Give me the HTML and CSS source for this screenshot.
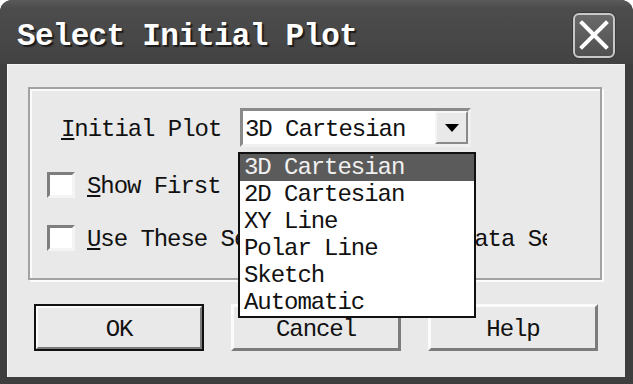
FILE: index.html
```html
<!DOCTYPE html>
<html>
<head>
<meta charset="utf-8">
<link rel="stylesheet" href="styles.css">
</head>
<body>
<div class="window">
  <div class="titlebar">
    <span class="title">Select Initial Plot</span>
    <div class="close">
      <svg width="30" height="30" viewBox="0 0 30 30"><path d="M3 3 L27 27 M27 3 L3 27" stroke="#fff" stroke-width="4" stroke-linecap="square"/></svg>
    </div>
  </div>
  <div class="client">
    <div class="group">
      <div class="row-plot">
        <span class="label"><u>I</u>nitial Plot</span>
        <div class="combo-wrap">
          <div class="combo">
            <span class="combo-text">3D Cartesian</span>
            <span class="arrow"><svg width="14" height="8" viewBox="0 0 14 8"><path d="M0 0 H14 L7 8 Z" fill="#000"/></svg></span>
          </div>
          <ul class="list">
            <li class="sel">3D Cartesian</li>
            <li>2D Cartesian</li>
            <li>XY Line</li>
            <li>Polar Line</li>
            <li>Sketch</li>
            <li>Automatic</li>
          </ul>
        </div>
      </div>
      <div class="check-row first">
        <span class="check"></span>
        <span class="check-label"><u>S</u>how First&nbsp; Data Set Only</span>
      </div>
      <div class="check-row">
        <span class="check"></span>
        <span class="check-label"><u>U</u>se These Settings for Each Data Set</span>
      </div>
    </div>
    <div class="buttons">
      <div class="btn default"><span class="btn-inner">OK</span></div>
      <div class="btn"><span class="btn-inner">Cancel</span></div>
      <div class="btn"><span class="btn-inner">Help</span></div>
    </div>
  </div>
</div>
</body>
</html>
```

FILE: styles.css
```css
html, body {
  margin: 0;
  padding: 0;
  background: #ffffff;
}
body {
  width: 633px;
  height: 384px;
  overflow: hidden;
  font-family: "Liberation Mono", "DejaVu Sans Mono", monospace;
  color: #111;
}
.window {
  width: 633px;
  height: 384px;
  box-sizing: border-box;
  background: #3e3e3e;
  border-radius: 12px 12px 0 0;
  display: flex;
  flex-direction: column;
}
.titlebar {
  height: 64px;
  flex: 0 0 64px;
  display: flex;
  align-items: center;
  padding: 0 18px 0 17px;
  border-radius: 12px 12px 0 0;
  background: linear-gradient(#5a5a5a 0px, #4c4c4c 8px, #474747 40px, #424242 64px);
}
.title {
  flex: 1;
  color: #fff;
  font-weight: bold;
  font-size: 31px;
  letter-spacing: -0.7px;
  text-shadow: 2px 2px 1px #1c1c1c;
  padding-top: 8px;
}
.close {
  width: 42px;
  height: 45px;
  margin-top: 6px;
  box-sizing: border-box;
  border: 2px solid #c8c8c8;
  border-radius: 6px;
  background: linear-gradient(#6a6a6a, #505050);
  display: flex;
  align-items: center;
  justify-content: center;
  box-shadow: 0 0 0 1px #3a3a3a;
}
.client {
  flex: 1;
  margin: 0 8px 7px 7px;
  background: #e9e9e9;
  padding: 23px 23px 0 21px;
  box-shadow: inset 1px 1px 0 #f4f4f4;
}
.group {
  height: 193px;
  box-sizing: border-box;
  border: 2px solid #a2a2a2;
  box-shadow: inset 2px 2px 0 #fbfbfb, 2px 2px 0 #fbfbfb;
  padding: 19px 0 0 17px;
}
.row-plot {
  display: flex;
  align-items: center;
  height: 39px;
}
.label {
  flex: 0 0 179px;
  margin-left: 14px;
  font-size: 24px;
  letter-spacing: -1.05px;
  padding-top: 3px;
}
.combo-wrap {
  position: relative;
  width: 231px;
  height: 39px;
}
.combo {
  width: 231px;
  height: 39px;
  box-sizing: border-box;
  background: #fff;
  border: 3px solid;
  border-color: #8a8a8a #f0f0f0 #f0f0f0 #8a8a8a;
  display: flex;
  align-items: center;
  padding-left: 2px;
}
.combo-text {
  flex: 1;
  font-size: 24px;
  letter-spacing: -1.05px;
  padding-top: 3px;
}
.arrow {
  width: 33px;
  height: 33px;
  box-sizing: border-box;
  background: #e9e9e9;
  border: 2px solid;
  border-color: #f6f6f6 #8a8a8a #8a8a8a #f6f6f6;
  display: flex;
  align-items: center;
  justify-content: center;
}
.list {
  position: absolute;
  left: -2px;
  top: 44px;
  width: 238px;
  height: 166px;
  box-sizing: border-box;
  margin: 0;
  padding: 0;
  list-style: none;
  background: #fff;
  border: 2px solid #111;
  z-index: 5;
}
.list li {
  height: 27px;
  line-height: 27px;
  padding-left: 4px;
  font-size: 24px;
  letter-spacing: -1.05px;
  white-space: nowrap;
}
.list li.sel {
  background: #5b5b5b;
  color: #f0f0f0;
}
.check-row {
  display: flex;
  align-items: center;
  height: 26px;
  margin-top: 27px;
}
.check-row.first {
  margin-top: 25px;
}
.check {
  width: 28px;
  height: 26px;
  box-sizing: border-box;
  background: #fff;
  border: 3px solid;
  border-color: #7e7e7e #f4f4f4 #f4f4f4 #7e7e7e;
  flex: 0 0 28px;
}
.check-label {
  margin-left: 12px;
  width: 460px;
  overflow: hidden;
  white-space: nowrap;
  font-size: 24px;
  letter-spacing: -1.05px;
  padding-top: 2px;
}
.buttons {
  display: flex;
  gap: 27px;
  margin: 24px 0 0 6px;
}
.btn {
  width: 170px;
  height: 47px;
  box-sizing: border-box;
  background: #e9e9e9;
  border: 3px solid;
  border-color: #fbfbfb #7c7c7c #7c7c7c #fbfbfb;
  display: flex;
}
.btn.default {
  border: 2px solid #111;
}
.btn-inner {
  flex: 1;
  display: flex;
  align-items: center;
  justify-content: center;
  font-size: 24px;
  letter-spacing: -1.05px;
  padding-top: 3px;
}
.btn.default .btn-inner {
  border: 2px solid;
  border-color: #fbfbfb #7c7c7c #7c7c7c #fbfbfb;
}
```
